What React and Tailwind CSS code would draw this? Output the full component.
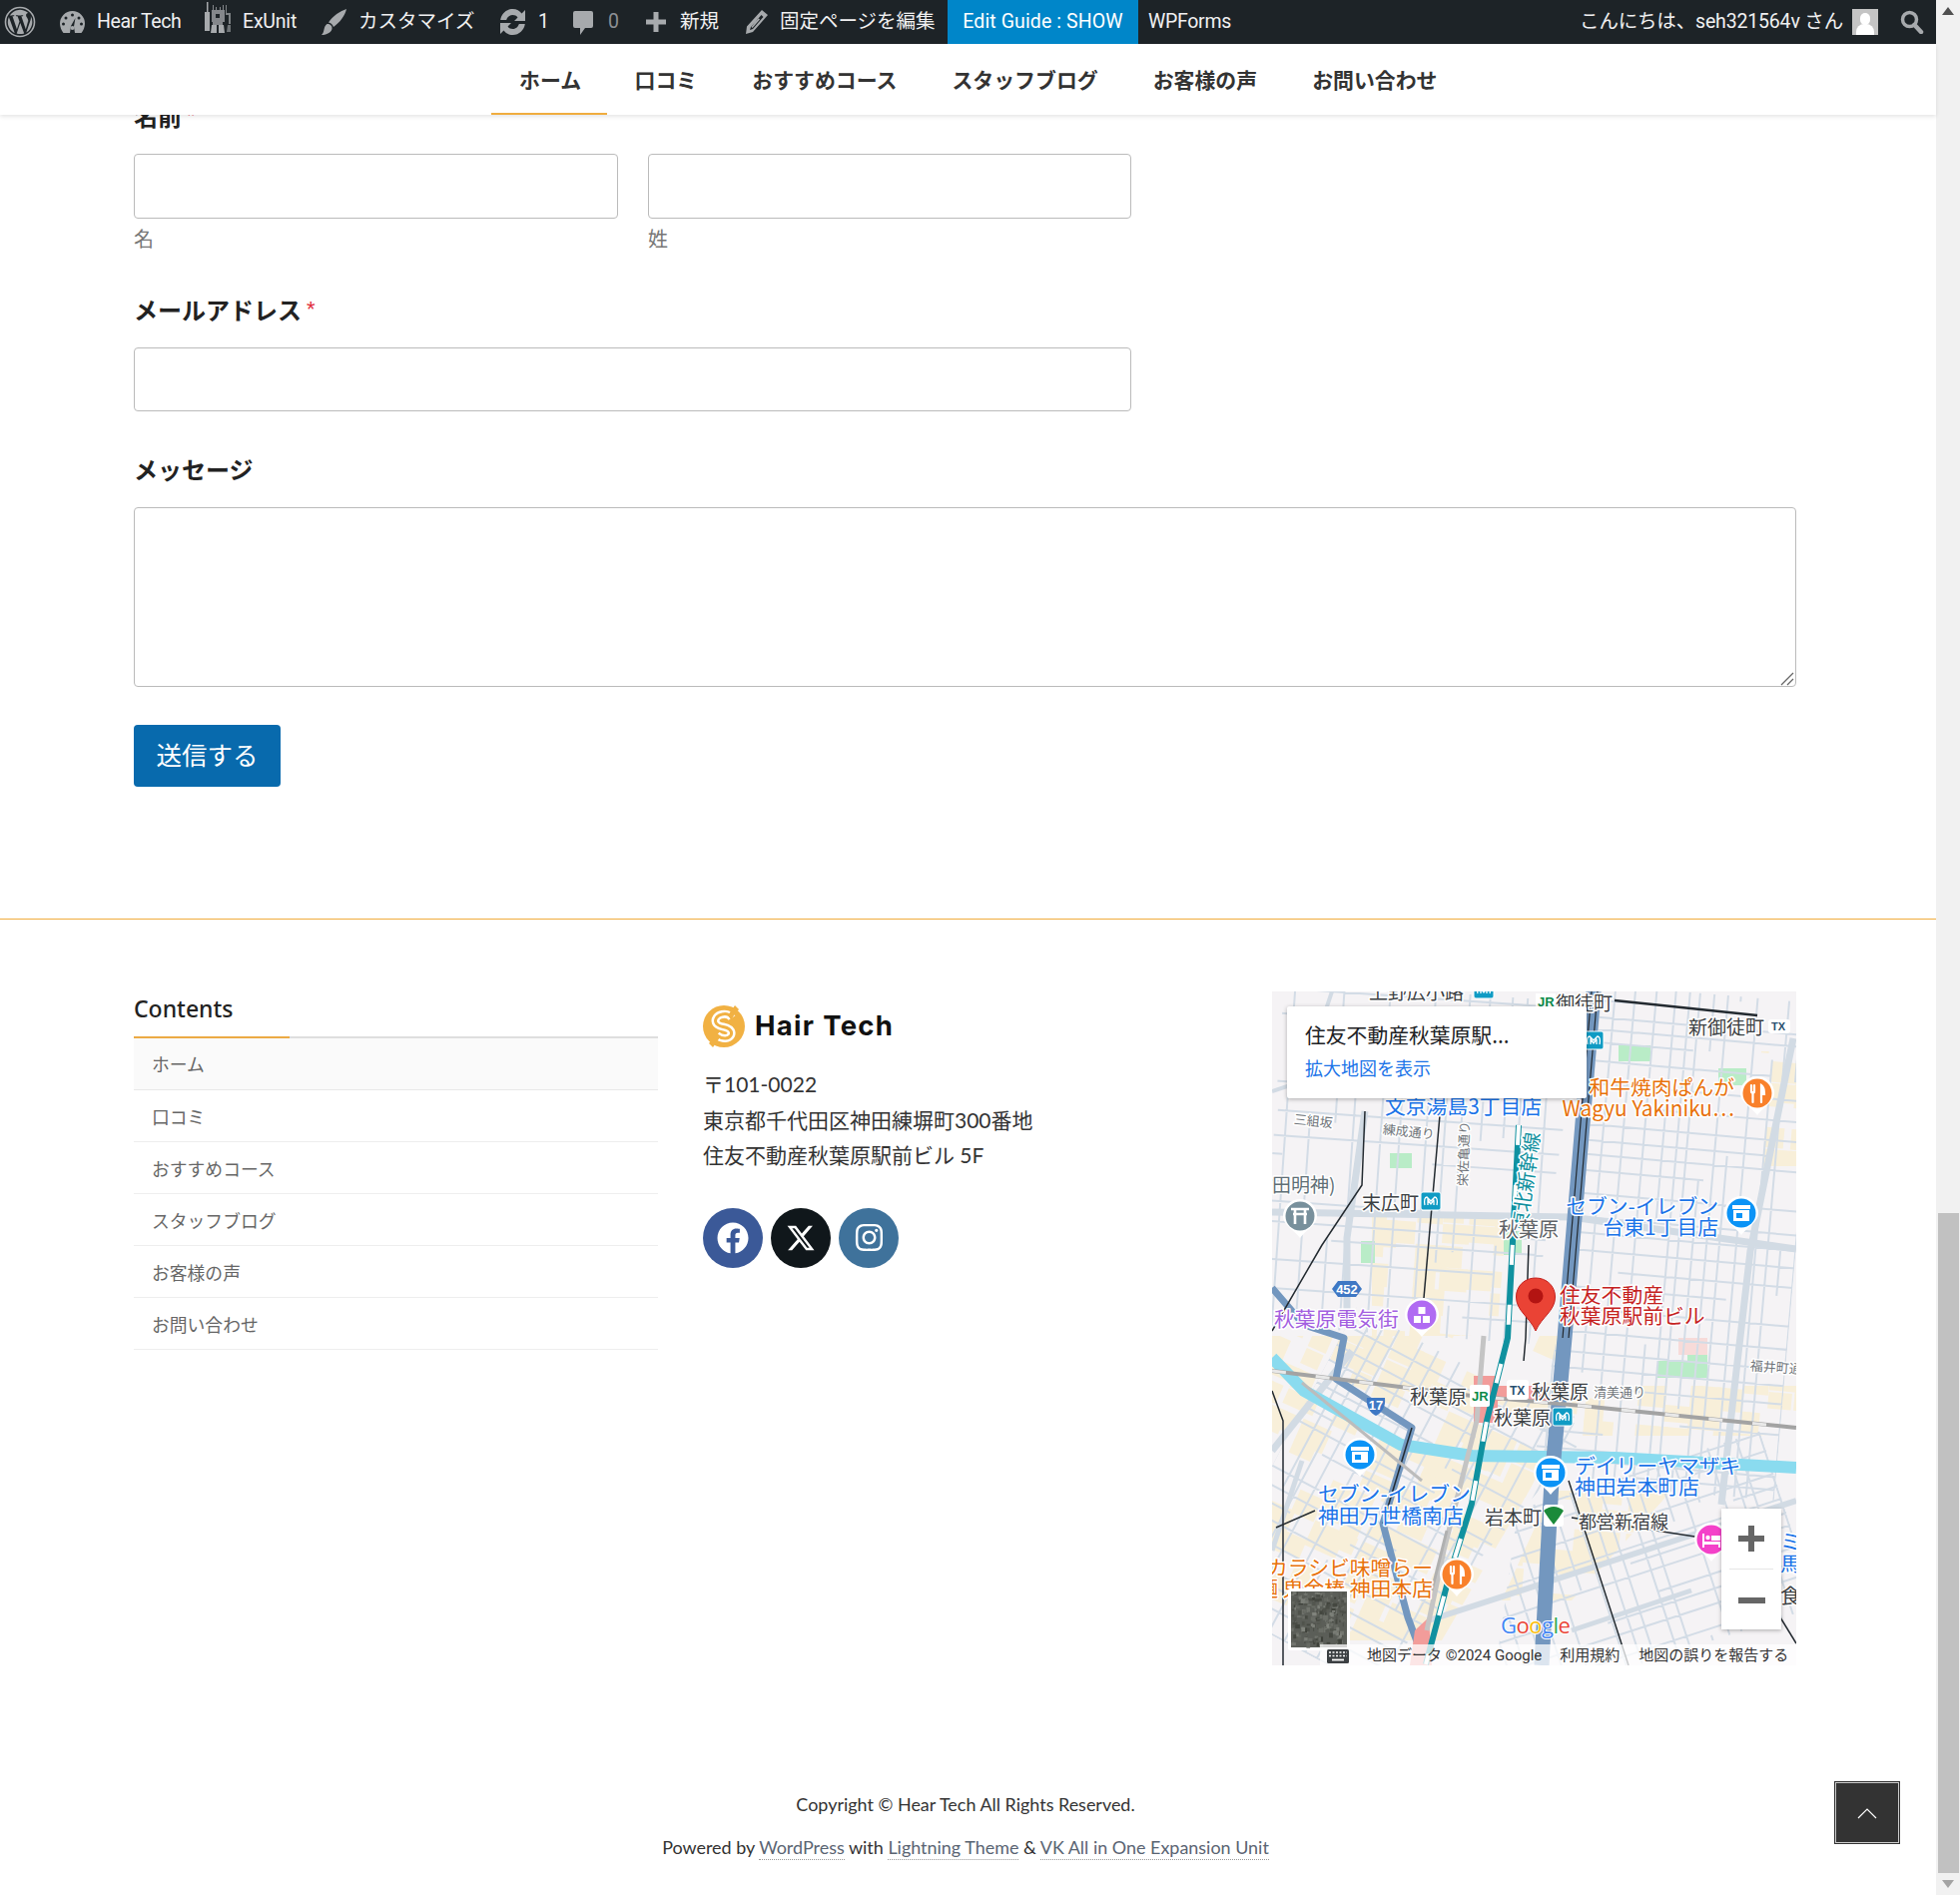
import React from "react";
import { FaFacebook, FaInstagram } from "react-icons/fa";
import { FaXTwitter } from "react-icons/fa6";

const JP = "'Noto Sans CJK JP', sans-serif";

function rng(seed) {
  let s = seed;
  return () => {
    s = (s * 16807) % 2147483647;
    return (s - 1) / 2147483646;
  };
}

function gridPath(seed, minS, maxS, stubby) {
  const r = rng(seed);
  let d = "";
  let x = -500;
  while (x < 1100) {
    x += minS + r() * (maxS - minS);
    let y = -500;
    while (y < 1100) {
      const len = 40 + r() * 140;
      if (r() > stubby) d += `M${x.toFixed(1)} ${y.toFixed(1)}V${(y + len).toFixed(1)}`;
      y += len;
    }
  }
  let y = -500;
  while (y < 1100) {
    y += minS + r() * (maxS - minS);
    let xx = -500;
    while (xx < 1100) {
      const len = 40 + r() * 140;
      if (r() > stubby) d += `M${xx.toFixed(1)} ${y.toFixed(1)}H${(xx + len).toFixed(1)}`;
      xx += len;
    }
  }
  return d;
}

function Patches({ seed, clip, t, x0, y0, x1, y1, p }) {
  const r = rng(seed);
  const out = [];
  for (let x = x0; x < x1; x += 26) {
    for (let y = y0; y < y1; y += 22) {
      if (r() < p) out.push(<rect key={`${x}-${y}`} x={x} y={y} width={18 + r() * 18} height={14 + r() * 14} />);
    }
  }
  return (
    <g clipPath={clip}>
      <g transform={t} fill="#f8efd9">
        {out}
      </g>
    </g>
  );
}

function Pin({ x, y, color, kind }) {
  return (
    <g transform={`translate(${x} ${y})`}>
      <path d="M-17 0A17 17 0 1 1 17 0C17 9 7 13 0 22C-7 13-17 9-17 0Z" fill="#fff" />
      <circle r="14.5" fill={color} />
      {kind === "store" && (
        <g fill="#fff">
          <path d="M-9-8H9V-4H-9Z" />
          <path d="M-8-3H8V8H-8Z" />
          <path d="M-5 0H1V5H-5Z" fill={color} />
        </g>
      )}
      {kind === "food" && (
        <g fill="none" stroke="#fff" strokeWidth="2.2" strokeLinecap="round">
          <path d="M-6-8V-2C-6 0-3 0-3-2V-8M-4.5-1V9" />
          <path d="M4 9V-8C7-6 7-1 7 1H4" fill="#fff" />
        </g>
      )}
      {kind === "torii" && (
        <g fill="none" stroke="#fff" strokeWidth="2.6">
          <path d="M-9-7H9M-7-2H7M-5-7V8M5-7V8" />
        </g>
      )}
      {kind === "shop" && (
        <g fill="#fff">
          <rect x="-3.5" y="-8" width="7" height="7" />
          <rect x="-8" y="1" width="7" height="7" />
          <rect x="1" y="1" width="7" height="7" />
        </g>
      )}
      {kind === "bed" && (
        <g fill="#fff">
          <path d="M-9-6H-7V2H9V8H7V5H-7V8H-9Z" />
          <circle cx="-3.5" cy="-2" r="2.2" />
          <path d="M0-4H9V1H0Z" />
        </g>
      )}
    </g>
  );
}

function L({ x, y, c = "#3c4043", s = 20.8, a, t, w = 3, children }) {
  return (
    <text
      x={x}
      y={y}
      fill={c}
      fontSize={s}
      fontFamily={JP}
      textAnchor={a}
      dominantBaseline="central"
      stroke="#fff"
      strokeWidth={w}
      strokeLinejoin="round"
      paintOrder="stroke"
      transform={t}
    >
      {children}
    </text>
  );
}

function Metro({ x, y }) {
  return (
    <g transform={`translate(${x} ${y})`}>
      <rect x="-10" y="-9" width="20" height="18" rx="2" fill="#0f9bc4" stroke="#fff" />
      <path d="M-6 4C-7-1-6-4-4-4L0 0L4-4C6-4 7-1 6 4M-3 4C-3 1-3 0-3-1L0 3L3-1C3 0 3 1 3 4" fill="none" stroke="#fff" strokeWidth="1.3" />
    </g>
  );
}

function Sat() {
  const r = rng(77);
  const out = [];
  for (let i = 0; i < 260; i++) {
    const g = Math.floor(60 + r() * 70);
    out.push(
      <rect key={i} x={19 + r() * 52} y={601 + r() * 52} width={1 + r() * 4} height={1 + r() * 4} fill={`rgb(${g},${g + 3},${g - 4})`} />
    );
  }
  return (
    <g>
      <rect x="16" y="598" width="62" height="62" rx="2" fill="#fff" />
      <rect x="19" y="601" width="56" height="56" fill="#5b5e58" />
      {out}
    </g>
  );
}

function MapArt() {
  return (
    <svg viewBox="0 0 525 675" className="absolute inset-0 w-full h-full">
      <defs>
        <clipPath id="a"><path d="M0 0H300L270 345H0Z" /></clipPath>
        <clipPath id="b"><path d="M300 0H525V500H280L295 345Z" /></clipPath>
        <clipPath id="c"><path d="M0 345H265L190 675H0Z" /></clipPath>
        <clipPath id="d"><path d="M270 490H525V675H180Z" /></clipPath>
        <clipPath id="e"><path d="M0 345H290L275 470L170 650H0Z" /></clipPath>
        <clipPath id="f"><path d="M100 225H235L225 345H100Z" /></clipPath>
        <clipPath id="g"><path d="M300 395H525V445H300ZM490 60H525V175H490ZM280 500H400L300 610H230Z" /></clipPath>
      </defs>
      <rect width="525" height="675" fill="#f5f3f5" />
      <Patches seed={5} clip="url(#e)" t="rotate(24 120 500)" x0={-120} y0={250} x1={420} y1={780} p={0.62} />
      <Patches seed={9} clip="url(#f)" t="rotate(4 160 280)" x0={90} y0={210} x1={250} y1={360} p={0.7} />
      <Patches seed={15} clip="url(#g)" t="rotate(5 400 300)" x0={220} y0={40} x1={560} y1={640} p={0.6} />
      <g fill="#b9ecc7">
        <rect x="118" y="162" width="22" height="15" />
        <rect x="347" y="54" width="32" height="16" />
        <rect x="447" y="77" width="28" height="17" />
        <rect x="386" y="370" width="50" height="17" />
        <rect x="416" y="364" width="20" height="23" />
        <rect x="89" y="250" width="14" height="22" />
        <rect x="232" y="240" width="18" height="24" />
      </g>
      <rect x="407" y="347" width="29" height="17" fill="#f7dbd9" />
      <g fill="none" stroke="#d3dce6" strokeWidth="2">
        <path clipPath="url(#a)" transform="rotate(4 150 170)" d={gridPath(11, 14, 30, 0.25)} />
        <path clipPath="url(#b)" transform="rotate(5 400 250)" d={gridPath(23, 10, 24, 0.15)} />
        <path clipPath="url(#c)" transform="rotate(28 100 500)" d={gridPath(37, 13, 27, 0.2)} />
        <path clipPath="url(#d)" transform="rotate(-18 350 580)" d={gridPath(51, 12, 25, 0.2)} />
      </g>
      <g fill="none" stroke="#d2dbe4" strokeWidth="7" strokeLinejoin="round">
        <path d="M0 221L300 226L525 258" />
        <path d="M522 47L479 260L465 380L450 514" />
        <path d="M93 120L75 247L75 320" />
        <path d="M157 630L425 543L525 510" strokeWidth="6" />
        <path d="M0 460L80 360" />
        <path d="M0 100L30 90L60 0" strokeWidth="4" />
        <path d="M300 640L420 600" strokeWidth="5" />
        <path d="M30 470L0 560" strokeWidth="5" />
      </g>
      <path d="M0 367L32 400L129 454L200 465L343 467L525 477" fill="none" stroke="#8adbef" strokeWidth="12" />
      <g fill="none" stroke="#7397bf" strokeLinejoin="round">
        <path d="M322 0L293 347L280 490L270 675" strokeWidth="15" />
        <path d="M0 297L32 334L72 347L64 388L104 414L140 437L111 533L136 627L154 675" strokeWidth="7" />
      </g>
      <g fill="none" stroke="#232a30" strokeLinejoin="round">
        <path d="M320 0L291 347M326 0L297 347" strokeWidth="1.200" />
        <path d="M93 120L90 194L50 254L0 340" strokeWidth="1.5" />
        <path d="M168 124L152 307" strokeWidth="1.5" />
        <path d="M257 254L254 347L252 370" strokeWidth="1.5" />
        <path d="M343 9L486 24" strokeWidth="2.5" />
        <path d="M0 400L11 430L11 675" strokeWidth="1.5" />
        <path d="M4 537L43 520" strokeWidth="1.5" />
        <path d="M140 437L111 533" strokeWidth="1.5" />
        <path d="M297 490L357 675" strokeWidth="1.5" />
        <path d="M300 527L430 547" strokeWidth="1.5" />
        <path d="M465 555L525 653" strokeWidth="1.5" />
      </g>
      <g fill="#f29c9a">
        <path d="M202 385H226V432H202Z" />
        <path d="M226 395H276V410H226Z" />
        <path d="M143 640L157 627L160 675H138Z" />
      </g>
      <g fill="none" strokeLinejoin="round">
        <path d="M0 380L136 397L200 405L310 415L525 437" stroke="#a3a3a3" strokeWidth="4" />
        <path d="M0 380L136 397L200 405L310 415L525 437" stroke="#e8e8e8" strokeWidth="3" strokeDasharray="14 30" />
        <path d="M212 345L205 430L172 560L155 640" stroke="#c4c4c4" strokeWidth="5" />
        <path d="M30 392L150 490" stroke="#bcbcbc" strokeWidth="3" />
        <path d="M160 600L175 540" stroke="#b0b0b0" strokeWidth="3" />
        <path d="M247 134L236 347L215 430L200 513L179 580L154 674" stroke="#10919f" strokeWidth="6" />
        <path d="M247 134L236 347L215 430L200 513L179 580L154 674" stroke="#fff" strokeWidth="4" strokeDasharray="20 40" />
      </g>

      <L x="97" y="-1" s={19}>上野広小路</L>
      <Metro x="212" y="-2" />
      <rect x="264" y="2" width="20" height="16" fill="#fff" />
      <text x="266" y="15" fontSize="13" fontWeight="700" fill="#0b8a4a" fontFamily="'Liberation Sans', sans-serif">JR</text>
      <L x="284" y="10" s={19}>御徒町</L>
      <L x="417" y="34" s={19}>新御徒町</L>
      <rect x="497" y="28" width="22" height="14" rx="3" fill="#fff" />
      <text x="500" y="39" fontSize="11" fontWeight="700" fill="#29506f" fontFamily="'Liberation Sans', sans-serif">TX</text>
      <Metro x="322" y="49" />

      <L x="113" y="114" c="#1a73e8">文京湯島3丁目店</L>
      <L x="463" y="95" c="#e8710a" a="end">和牛焼肉ぱんが</L>
      <L x="463" y="116" c="#e8710a" a="end">Wagyu Yakiniku…</L>
      <Pin x={486} y={102} color="#f9802a" kind="food" />

      <L x="22" y="127" s={13} c="#70757a" t="rotate(6 22 127)">三組坂</L>
      <L x="111" y="137" s={13} c="#70757a" t="rotate(6 111 137)">練成通り</L>
      <L x="190" y="195" s={13} c="#70757a" t="rotate(-88 190 195)">栄佐亀通り</L>
      <L x="246" y="240" s={20} c="#12919f" t="rotate(-82 246 240)">東北新幹線</L>

      <L x="0" y="192" s={19} c="#5f6f76">田明神)</L>
      <Pin x={28} y={225} color="#78909c" kind="torii" />
      <L x="90" y="210" s={19}>末広町</L>
      <Metro x="159" y="210" />
      <L x="447" y="214" c="#1a73e8" a="end">セブン-イレブン</L>
      <L x="447" y="235" c="#1a73e8" a="end">台東1丁目店</L>
      <Pin x={470} y={222} color="#0b93f6" kind="store" />
      <L x="227" y="237" s={20} c="#5f6368">秋葉原</L>

      <path d="M60 298L66 290H84L90 298L84 306H66Z" fill="#3f78c4" />
      <text x="75" y="303" textAnchor="middle" fontSize="13" fontWeight="700" fill="#fff" fontFamily="'Liberation Sans', sans-serif">452</text>
      <L x="2" y="327" c="#a35fe0">秋葉原電気街</L>
      <Pin x={150} y={324} color="#b06bf2" kind="shop" />

      <L x="288" y="303" c="#c5221f">住友不動産</L>
      <L x="288" y="324" c="#c5221f">秋葉原駅前ビル</L>
      <path d="M264 287C275 287 283.500 295 283.500 306C283.500 320 270 326 264 340C258 326 244.500 320 244.500 306C244.500 295 253 287 264 287Z" fill="#ea4335" stroke="#c5221f" />
      <circle cx="264" cy="305" r="7.500" fill="#b31412" />

      <L x="479" y="374" s={13} c="#70757a" t="rotate(4 479 374)">福井町通り</L>
      <L x="138" y="404" s={19}>秋葉原</L>
      <rect x="198" y="394" width="20" height="22" rx="2" fill="#fff" />
      <text x="200" y="410" fontSize="13" fontWeight="700" fill="#0b8a4a" fontFamily="'Liberation Sans', sans-serif">JR</text>
      <rect x="235" y="389" width="22" height="20" rx="3" fill="#fff" />
      <text x="238" y="404" fontSize="12" fontWeight="700" fill="#29506f" fontFamily="'Liberation Sans', sans-serif">TX</text>
      <L x="260" y="399" s={19}>秋葉原</L>
      <L x="322" y="400" s={13} c="#70757a">清美通り</L>
      <L x="222" y="425" s={19}>秋葉原</L>
      <Metro x="291" y="426" />
      <path d="M95 407H113C114 416 110 422 104 425C98 422 94 416 95 407Z" fill="#3f78c4" />
      <text x="104" y="419" textAnchor="middle" fontSize="13" fontWeight="700" fill="#fff" fontFamily="'Liberation Sans', sans-serif">17</text>
      <Pin x={88} y={464} color="#0b93f6" kind="store" />
      <L x="46" y="502" c="#1a73e8">セブン-イレブン</L>
      <L x="46" y="524" c="#1a73e8">神田万世橋南店</L>
      <Pin x={279} y={482} color="#0b93f6" kind="store" />
      <L x="303" y="474" c="#1a73e8">デイリーヤマザキ</L>
      <L x="303" y="495" c="#1a73e8">神田岩本町店</L>
      <L x="213" y="525" s={19}>岩本町</L>
      <rect x="272" y="514" width="20" height="22" rx="3" fill="#fff" />
      <path d="M272 520Q282 512 292 520Q287 528 282 534Q277 528 272 520Z" fill="#1b8a3a" />
      <L x="307" y="530" s={18}>都営新宿線</L>
      <Pin x={440} y={549} color="#f441c9" kind="bed" />
      <L x="509" y="550" c="#1a73e8">ミ</L>
      <L x="509" y="572" c="#1a73e8">馬</L>
      <L x="509" y="604">食</L>
      <L x="161" y="576" c="#e8710a" a="end">カラシビ味噌らー</L>
      <L x="161" y="597" c="#e8710a" a="end">麺 鬼金棒 神田本店</L>
      <Pin x={185} y={584} color="#f9802a" kind="food" />
      <Sat />
      <text x="229" y="643" fontSize="22" fontFamily="'Open Sans', sans-serif" stroke="#fff" strokeWidth="2" paintOrder="stroke" letterSpacing="-0.5">
        <tspan fill="#4285f4">G</tspan>
        <tspan fill="#ea4335">o</tspan>
        <tspan fill="#fbbc05">o</tspan>
        <tspan fill="#4285f4">g</tspan>
        <tspan fill="#34a853">l</tspan>
        <tspan fill="#ea4335">e</tspan>
      </text>
    </svg>
  );
}

function GoogleMap() {
  return (
    <div className="relative w-[525px] h-[675px] overflow-hidden">
      <MapArt />
      <div className="absolute left-[15px] top-[15px] w-[300px] h-[92px] bg-white rounded-[2px] shadow-[0_1px_4px_rgba(0,0,0,0.3)] pl-[18px] pt-[13px]">
        <div className="text-[20.800px] leading-[30px] text-[#202124] [font-family:'Noto_Sans_CJK_JP',sans-serif]">住友不動産秋葉原駅...</div>
        <div className="mt-[6px] text-[18px] leading-[24px] text-[#1a73e8] [font-family:'Noto_Sans_CJK_JP',sans-serif]">拡大地図を表示</div>
      </div>
      <div className="absolute left-[450px] top-[518px] w-[60px] h-[121px] bg-white shadow-[0_1px_4px_rgba(0,0,0,0.3)] flex flex-col items-center">
        <svg width="28" height="28" viewBox="0 0 28 28" className="mt-[16px]">
          <path d="M11 1H17V11H27V17H17V27H11V17H1V11H11Z" fill="#666" />
        </svg>
        <div className="mt-[16px] w-[44px] h-px bg-[#e6e6e6]" />
        <div className="mt-[28px] w-[27px] h-[6px] bg-[#666]" />
      </div>
      <div className="absolute left-[48px] right-0 top-[654px] h-[21px] bg-white/75 flex items-center pt-[2px] text-[15px] leading-none text-[#333] [font-family:'Roboto','Noto_Sans_CJK_JP',sans-serif] whitespace-nowrap">
        <svg width="22" height="14" viewBox="0 0 22 14" className="ml-[7px]">
          <rect width="22" height="14" rx="1.500" fill="#3c4043" />
          <path d="M2 3H20M2 6.500H20" stroke="#fff" strokeWidth="1.500" strokeDasharray="2 1.500" />
          <path d="M5 10.500H17" stroke="#fff" strokeWidth="1.800" />
        </svg>
        <span className="ml-[18px]">地図データ ©2024 Google</span>
        <span className="ml-[18px]">利用規約</span>
        <span className="ml-[19px]">地図の誤りを報告する</span>
      </div>
    </div>
  );
}

const I = "#a7aaad";

function WpLogo() {
  return (
    <svg width="32" height="32" viewBox="0 0 32 32" className="ml-[4px] shrink-0">
      <circle cx="16" cy="16" r="14.500" fill="none" stroke={I} strokeWidth="1.600" />
      <path
        d="M3.800 16c0 4.800 2.800 9 6.900 11L4.900 11C4.200 12.600 3.800 14.200 3.800 16ZM24.300 15.400c0-1.500-.5-2.600-1-3.400-.6-1-1.200-1.800-1.200-2.800 0-1.100.8-2.100 2-2.100h.2A12.200 12.200 0 0 0 5.800 9.400h.8c1.300 0 3.200-.2 3.200-.2.700 0 .8.900.1 1 0 0-.7.100-1.400.1l4.400 13 2.600-7.900-1.900-5.100c-.7 0-1.300-.1-1.300-.1-.7 0-.6-1.100 0-1 0 0 2 .2 3.200.2 1.300 0 3.200-.2 3.200-.2.700 0 .8.900.1 1 0 0-.7.100-1.400.1l4.400 12.900 1.200-4c.5-1.700.9-2.900.9-3.800ZM16.300 17l-3.600 10.600a12.300 12.300 0 0 0 7.500-.2l-.1-.2ZM26.800 10.100c.1.400.1.800.1 1.300 0 1.200-.2 2.600-.9 4.400l-3.700 10.700A12.200 12.200 0 0 0 26.800 10.100Z"
        fill={I}
      />
    </svg>
  );
}

function Dash() {
  return (
    <svg width="25" height="22" viewBox="0 0 25 22" className="ml-[24px] shrink-0">
      <path d="M12.500 0A12.500 12.500 0 0 0 0 12.500C0 16 1.500 19.500 3.500 22H21.500C23.500 19.500 25 16 25 12.500A12.500 12.500 0 0 0 12.500 0Z" fill={I} />
      <g fill="#1d2327">
        <circle cx="12.500" cy="4" r="1.500" />
        <circle cx="6" cy="7" r="1.500" />
        <circle cx="3.500" cy="13" r="1.500" />
        <circle cx="19" cy="7" r="1.500" />
        <circle cx="21.500" cy="13" r="1.500" />
        <path d="M10 22L11 15L15.500 7L14 15.500L15 22Z" />
      </g>
      <circle cx="12.500" cy="17" r="2" fill={I} />
    </svg>
  );
}

function Robot() {
  return (
    <svg width="28" height="31" viewBox="0 0 28 31" className="ml-[24px] shrink-0 self-start mt-[2px]">
      <g fill={I}>
        <path d="M3 0H4.500V10H6V29H1V10H3Z" />
        <path d="M8 8H9V3H10V8H12V5H13V8H16V5H17V8H19V3H20V8H21V20H19V23H9V20H8Z" opacity=".75" />
        <path d="M22 3H23V11H27V22H25V13H22Z" opacity=".7" />
        <path d="M8 23H13V31H7ZM15 23H20L21 31H15Z" />
        <path d="M12 12H16V16H12Z" fill="#1d2327" />
        <path d="M24 23H27V30H23Z" opacity=".6" />
      </g>
    </svg>
  );
}

function Brush() {
  return (
    <svg width="25" height="26" viewBox="0 0 25 26" className="ml-[25px] shrink-0">
      <path d="M25 0C24 6 18 14 12 18C11 15.500 9.500 14 7 13.500C11 7 19 2 25 0Z" fill={I} />
      <path d="M5.500 15C9 15 11 17 10.500 20C9.500 24 4 26 0 26C3.500 23 1.500 18 5.500 15Z" fill={I} />
    </svg>
  );
}

function Update() {
  return (
    <svg width="29" height="26" viewBox="0 0 29 26" className="ml-[23px] shrink-0">
      <g fill={I}>
        <path d="M14.500 0C18.500 0 21.500 1.800 23.500 4.500L27 1V12H16L19.500 8.500C18.200 6.700 16.500 6 14.500 6C11 6 9 8.500 8.200 11H2.200C3 5 8 0 14.500 0Z" />
        <path d="M14.500 26C10.500 26 7.500 24.200 5.500 21.500L2 25V14H13L9.500 17.500C10.800 19.300 12.500 20 14.500 20C18 20 20 17.500 20.800 15H26.800C26 21 21 26 14.500 26Z" />
      </g>
    </svg>
  );
}

function Comment() {
  return (
    <svg width="20" height="26" viewBox="0 0 20 26" className="ml-[28px] shrink-0">
      <path d="M2 2H18A2 2 0 0 1 20 4V17A2 2 0 0 1 18 19H12L7 26V19H2A2 2 0 0 1 0 17V4A2 2 0 0 1 2 2Z" fill={I} />
    </svg>
  );
}

function Plus() {
  return (
    <svg width="20" height="20" viewBox="0 0 20 20" className="ml-[28px] shrink-0">
      <path d="M7.500 0H12.500V7.500H20V12.500H12.500V20H7.500V12.500H0V7.500H7.500Z" fill={I} />
    </svg>
  );
}

function Pencil() {
  return (
    <svg width="22" height="24" viewBox="0 0 22 24" className="ml-[27px] shrink-0">
      <path d="M16 0L22 5L7 22L0 24L1 16.500ZM15.500 5L5 17L4 20L7 19L17.500 7ZM12.500 8L14 9.500L6.500 18L5.500 17Z" fill={I} fillRule="evenodd" />
    </svg>
  );
}

function Search() {
  return (
    <svg width="24" height="24" viewBox="0 0 24 24" className="ml-[22px] shrink-0">
      <circle cx="9.500" cy="9.500" r="7" fill="none" stroke={I} strokeWidth="3.500" />
      <path d="M14.500 15L21 22" stroke={I} strokeWidth="4.500" strokeLinecap="round" />
    </svg>
  );
}

function AdminBar() {
  return (
    <div className="h-[44px] bg-[#1d2327] flex items-center text-[19.500px] leading-none text-[#f0f0f1] whitespace-nowrap [font-family:'Roboto','Noto_Sans_CJK_JP',sans-serif] shrink-0 relative z-20">
      <WpLogo />
      <Dash />
      <span className="ml-[12px] w-[83px] tracking-[-0.4px]">Hear Tech</span>
      <Robot />
      <span className="ml-[11px] w-[54px] tracking-[-0.2px]">ExUnit</span>
      <Brush />
      <span className="ml-[12px] w-[117px]">カスタマイズ</span>
      <Update />
      <span className="ml-[11px] w-[7px]">1</span>
      <Comment />
      <span className="ml-[15px] w-[10px] text-[#8c8f94]">0</span>
      <Plus />
      <span className="ml-[14px] w-[39px]">新規</span>
      <Pencil />
      <span className="ml-[12px] w-[156px]">固定ページを編集</span>
      <div className="ml-[12px] w-[191px] h-full bg-[#0086c9] flex items-center justify-center text-white tracking-[0.1px]">Edit Guide : SHOW</div>
      <span className="ml-[10px] tracking-[-0.3px]">WPForms</span>
      <div className="ml-auto flex items-center pr-[12px]">
        <span className="tracking-[-0.17px]">こんにちは、seh321564v さん</span>
        <div className="ml-[9px] w-[26px] h-[26px] bg-[#c4c4c4] relative overflow-hidden shrink-0">
          <div className="absolute left-[8px] top-[4px] w-[10px] h-[12px] rounded-full bg-white" />
          <div className="absolute left-[4px] top-[15px] w-[18px] h-[14px] rounded-t-[8px] bg-white" />
        </div>
        <Search />
      </div>
    </div>
  );
}

const navItems = ["ホーム", "口コミ", "おすすめコース", "スタッフブログ", "お客様の声", "お問い合わせ"];

function Nav() {
  return (
    <nav className="h-[71px] bg-white shadow-[0_2px_4px_rgba(0,0,0,0.1)] relative z-10 flex pl-[492px] shrink-0">
      {navItems.map((t, i) => (
        <a
          key={t}
          className={
            i === 0
              ? "h-[71px] pl-[28px] pr-[26px] pt-[2px] flex items-center text-[20.900px] font-bold text-[#333] border-b-2 border-[#f0ad3f]"
              : "h-[71px] px-[27.500px] flex items-center text-[20.900px] font-bold text-[#333]"
          }
        >
          {t}
        </a>
      ))}
    </nav>
  );
}

function Req() {
  return <span className="ml-[5px] text-[22px] leading-[22px] align-top text-[#e02b3c] font-normal [font-family:'Liberation_Sans',sans-serif]">*</span>;
}

const inputCls = "block border border-[#bbb] rounded-[4px] bg-white outline-none";

function Form() {
  return (
    <div className="ml-[134px] w-[1665px]">
      <div className="-mt-[10px] h-[24px] text-[24px] leading-[24px] font-bold text-[#222]">
        名前<Req />
      </div>
      <div className="mt-[25px] flex gap-[30px]">
        <div className="w-[485px]">
          <input className={`${inputCls} w-full h-[65px]`} />
          <div className="mt-[5px] text-[20px] leading-[30px] text-[#777]">名</div>
        </div>
        <div className="w-[484px]">
          <input className={`${inputCls} w-full h-[65px]`} />
          <div className="mt-[5px] text-[20px] leading-[30px] text-[#777]">姓</div>
        </div>
      </div>
      <div className="mt-[45px] h-[24px] text-[24px] leading-[24px] font-bold text-[#222]">
        メールアドレス<Req />
      </div>
      <input className={`${inputCls} mt-[25px] w-[999px] h-[64px]`} />
      <div className="mt-[47px] h-[24px] text-[24px] leading-[24px] font-bold text-[#222]">メッセージ</div>
      <div className="relative mt-[25px] w-[1665px] h-[180px]">
        <textarea className={`${inputCls} w-full h-full resize-none`} />
        <svg width="14" height="14" viewBox="0 0 14 14" className="absolute right-[2px] bottom-[1px]">
          <path d="M1 13L13 1M7 13L13 7" stroke="#666" strokeWidth="1.300" />
        </svg>
      </div>
      <button className="mt-[38px] block w-[147px] h-[62px] bg-[#086aad] rounded-[4px] text-white text-[25.500px] leading-none">送信する</button>
    </div>
  );
}

const footerItems = ["ホーム", "口コミ", "おすすめコース", "スタッフブログ", "お客様の声", "お問い合わせ"];

function Contents() {
  return (
    <div className="w-[525px]">
      <div className="relative h-[47px] border-b-2 border-[#dedede] text-[23px] leading-[34px] font-medium text-[#222] [font-family:'Noto_Sans','Noto_Sans_CJK_JP',sans-serif]">
        Contents
        <div className="absolute left-0 bottom-[-2px] w-[156px] h-[2px] bg-[#ecaa45]" />
      </div>
      <ul>
        {footerItems.map((t, i) => (
          <li
            key={t}
            className={
              i === 0
                ? "h-[52px] border-b border-[#e8e8e8] bg-[#fafafa] flex items-center pl-[18px] pt-[2px] text-[17.800px] text-[#666]"
                : "h-[52px] border-b border-[#eee] flex items-center pl-[18px] pt-[3px] text-[17.800px] text-[#666]"
            }
          >
            {t}
          </li>
        ))}
      </ul>
    </div>
  );
}

function LogoMark() {
  return (
    <svg width="42" height="42" viewBox="0 0 42 42" className="shrink-0">
      <circle cx="21" cy="21" r="21" fill="#f1b143" />
      <path
        d="M29 12.500C27 9.500 23 8 19 9C14 10 11.500 14 13 17.500C14.500 21 20 21 24 22.500C28 24 29.500 27 28 30C26 33.500 20 34.500 14 30"
        fill="none"
        stroke="#fff"
        strokeWidth="8"
      />
      <path
        d="M29 12.500C27 9.500 23 8 19 9C14 10 11.500 14 13 17.500C14.500 21 20 21 24 22.500C28 24 29.500 27 28 30C26 33.500 20 34.500 14 30"
        fill="none"
        stroke="#f1b143"
        strokeWidth="3"
      />
      <path d="M32 0L36 4L28 14L25 10ZM10 42L6 38L14 28L17 32Z" fill="#f1b143" />
    </svg>
  );
}

function Company() {
  return (
    <div className="w-[525px] pt-[14px]">
      <div className="flex items-center">
        <LogoMark />
        <span className="ml-[10px] text-[27.500px] leading-none font-bold tracking-[1.300px] text-[#111] [font-family:'Inter',sans-serif]">Hair Tech</span>
      </div>
      <div className="mt-[19px] mb-[35px] text-[21px] leading-[35.500px] text-[#333]">
        <div>〒101-0022</div>
        <div>東京都千代田区神田練塀町300番地</div>
        <div>住友不動産秋葉原駅前ビル 5F</div>
      </div>
      <div className="flex gap-[8px]">
        <div className="w-[60px] h-[60px] rounded-full bg-[#3b5998] flex items-center justify-center text-white">
          <FaFacebook size={32} />
        </div>
        <div className="w-[60px] h-[60px] rounded-full bg-[#10171b] flex items-center justify-center text-white">
          <FaXTwitter size={30} />
        </div>
        <div className="w-[60px] h-[60px] rounded-full bg-[#3f729b] flex items-center justify-center text-white">
          <FaInstagram size={31} />
        </div>
      </div>
    </div>
  );
}

const linkCls = "text-[#5a6472] border-b border-dotted border-[#999] pb-px";

function Footer() {
  return (
    <footer>
      <div className="mt-[132px] border-t border-[#f0ad3f]" />
      <div className="ml-[134px] w-[1665px] pt-[72px] flex gap-[45px]">
        <Contents />
        <Company />
        <GoogleMap />
      </div>
      <div className="ml-[134px] w-[1666px] text-center text-[17.950px] text-[#333]">
        <p className="mt-[124px] leading-[30px]">Copyright © Hear Tech All Rights Reserved.</p>
        <p className="mt-[13px] leading-[30px]">
          Powered by <a className={linkCls}>WordPress</a> with <a className={linkCls}>Lightning Theme</a> &amp;{" "}
          <a className={linkCls}>VK All in One Expansion Unit</a>
        </p>
      </div>
    </footer>
  );
}

function Scrollbar() {
  return (
    <div className="w-[24px] h-[1898px] bg-[#f1f1f1] flex flex-col items-center shrink-0">
      <svg width="12" height="8" viewBox="0 0 12 8" className="mt-[7px]">
        <path d="M6 0L12 8H0Z" fill="#505050" />
      </svg>
      <div className="mt-[1200px] w-[21px] h-[661px] bg-[#c1c1c1]" />
      <svg width="12" height="8" viewBox="0 0 12 8" className="mt-[7px]">
        <path d="M0 0H12L6 8Z" fill="#a3a3a3" />
      </svg>
    </div>
  );
}

export default function App() {
  return (
    <div className="relative w-[1963px] h-[1898px] overflow-hidden bg-white flex [font-family:'Lato','Noto_Sans_CJK_JP',sans-serif]">
      <div className="w-[1939px] h-[1898px] flex flex-col shrink-0">
        <AdminBar />
        <Nav />
        <Form />
        <Footer />
      </div>
      <Scrollbar />
      <button className="absolute left-[1837px] top-[1784px] w-[66px] h-[63px] bg-[#333] border-2 border-[#ccc] outline outline-1 outline-[#333] -outline-offset-1 flex items-center justify-center">
        <svg width="20" height="12" viewBox="0 0 20 12">
          <path d="M1 11L10 2L19 11" fill="none" stroke="#fff" strokeWidth="1.200" />
        </svg>
      </button>
    </div>
  );
}
